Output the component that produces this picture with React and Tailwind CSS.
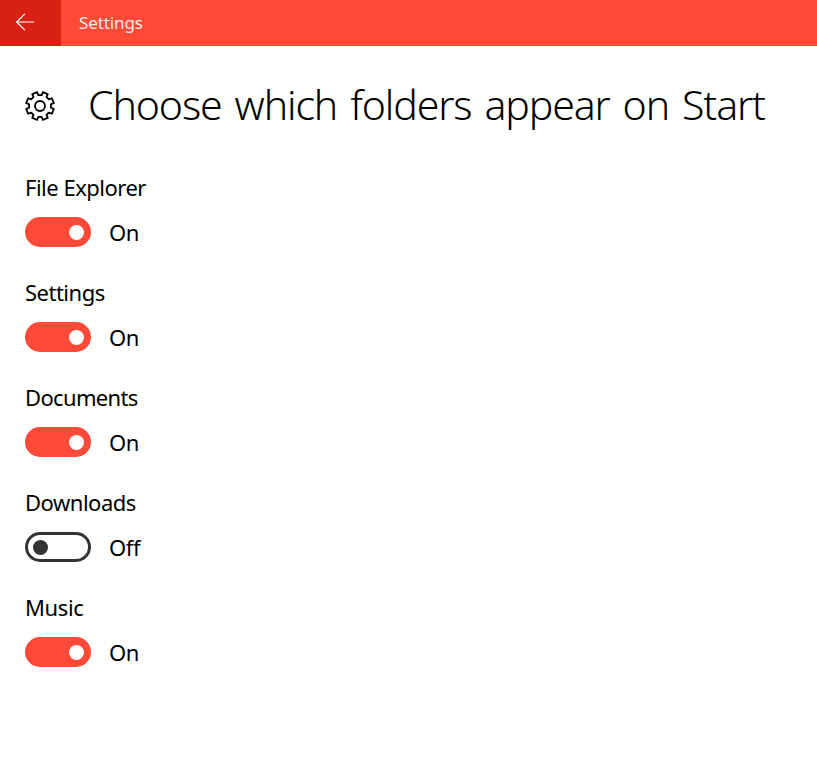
import { useState } from "react";

const FOLDERS = [
  { name: "File Explorer", on: true, spacing: "tracking-[-0.5px]" },
  { name: "Settings", on: true, spacing: "tracking-[-0.5px]" },
  { name: "Documents", on: true, spacing: "tracking-[-0.65px]" },
  { name: "Downloads", on: false, spacing: "tracking-[-0.48px]" },
  { name: "Music", on: true, spacing: "tracking-[-0.4px]" },
];

// eight teeth, with a notch pointing straight up
function gearPath() {
  const points = [];
  for (let i = 0; i < 8; i++) {
    const center = -67.5 + i * 45;
    [
      [-14, 11],
      [-10.5, 14.2],
      [10.5, 14.2],
      [14, 11],
    ].forEach(([offset, radius]) => {
      const angle = ((center + offset) * Math.PI) / 180;
      points.push(`${(16 + radius * Math.cos(angle)).toFixed(2)} ${(16 + radius * Math.sin(angle)).toFixed(2)}`);
    });
  }
  return `M${points.join("L")}Z`;
}

function GearIcon() {
  return (
    <svg viewBox="0 0 32 32" className="h-8 w-8 shrink-0" fill="none" stroke="black" strokeWidth="1.8" strokeLinejoin="round">
      <path d={gearPath()} />
      <circle cx="16" cy="16" r="5" />
    </svg>
  );
}

function BackIcon() {
  return (
    <svg viewBox="0 0 20 18" className="h-[18px] w-5" fill="none" stroke="white" strokeWidth="1.2">
      <path d="M9.9 0.9L1.7 9L9.9 17.1M1.7 9H19" />
    </svg>
  );
}

function FolderToggle({ name, on, spacing, onToggle }) {
  return (
    <div className="h-[105px]">
      <div className={`h-[45px] whitespace-nowrap text-[22px] leading-[30px] ${spacing}`}>{name}</div>
      <div className="flex h-[30px] items-center">
        <button
          type="button"
          role="switch"
          aria-checked={on}
          aria-label={name}
          onClick={onToggle}
          className={`flex h-[30px] w-[66px] items-center rounded-full border-[3px] ${
            on ? "justify-end border-[#ff4a38] bg-[#ff4a38] pr-1" : "justify-start border-[#333333] pl-[5px]"
          }`}
        >
          <span className={`h-[15px] w-[15px] rounded-full ${on ? "bg-white" : "bg-[#333333]"}`} />
        </button>
        <span className="ml-[18px] text-[22px] leading-[30px] tracking-[-0.35px]">{on ? "On" : "Off"}</span>
      </div>
    </div>
  );
}

export default function App() {
  const [folders, setFolders] = useState(FOLDERS);

  const toggle = (name) => {
    setFolders((prev) => prev.map((item) => (item.name === name ? { ...item, on: !item.on } : item)));
  };

  return (
    <div className="h-[765px] w-[817px] overflow-hidden bg-[#fffffd] font-['Noto_Sans','Open_Sans',sans-serif] text-black">
      <header className="flex h-[46px] bg-[#ff4a38] text-white">
        <button type="button" aria-label="Back" className="flex w-[61px] items-center bg-[#d82114] pb-[3px] pl-[15px]">
          <BackIcon />
        </button>
        <span className="pl-[18px] text-[17px] leading-[45px] tracking-[-0.1px] text-[#ffe9e6]">Settings</span>
      </header>
      <main className="pl-[25px]">
        <div className="flex h-[126px] items-start pt-[29px]">
          <div className="-ml-px pt-[15px]">
            <GearIcon />
          </div>
          <h1 className="ml-8 whitespace-nowrap text-[41px] font-light leading-[58px] tracking-[-1.1px] [word-spacing:3.4px]">
            Choose which folders appear on Start
          </h1>
        </div>
        {folders.map((item) => (
          <FolderToggle key={item.name} {...item} onToggle={() => toggle(item.name)} />
        ))}
      </main>
    </div>
  );
}
